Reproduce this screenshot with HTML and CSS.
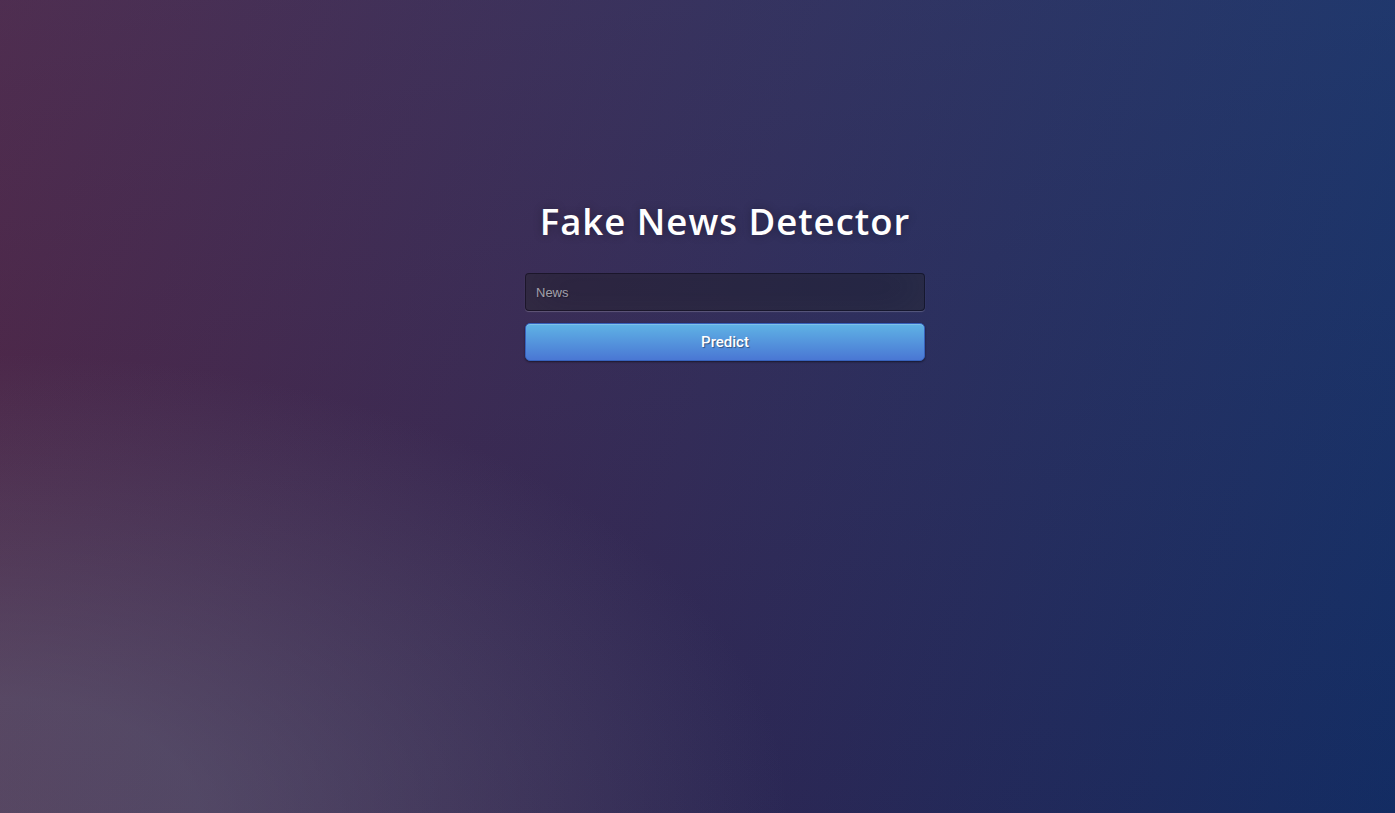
FILE: index.html
```html
<!DOCTYPE html>
<html lang="en">
<head>
<meta charset="utf-8">
<title>Fake News Detector</title>
<link rel="stylesheet" href="styles.css">
</head>
<body>
<main class="page">
  <div class="login">
    <h1 class="title">Fake News Detector</h1>
    <form class="form">
      <input class="field" type="text" name="news" placeholder="News">
      <button class="btn" type="submit">Predict</button>
    </form>
  </div>
</main>
</body>
</html>
```

FILE: styles.css
```css
* { box-sizing: border-box; }
html, body { margin: 0; height: 100%; }
body {
  font-family: "Open Sans", sans-serif;
  background-color: #14295a;
  background-image:
    radial-gradient(ellipse farthest-corner at 0% 100%, rgba(110,132,150,.38) 10%, rgba(110,132,150,0) 40%),
    linear-gradient(to bottom, rgba(50,150,219,.16) 0%, rgba(50,150,219,.04) 100%),
    linear-gradient(108deg, rgb(84,26,54) 0%, rgb(18,40,94) 100%);
  background-attachment: fixed;
  min-height: 100vh;
}
.page {
  display: flex;
  justify-content: center;
  padding: 197px 0 0 55px;
}
.login { width: 400px; }
.title {
  margin: 0 0 27px;
  color: #fff;
  font-size: 36.5px;
  font-weight: 600;
  line-height: 49px;
  letter-spacing: 1px;
  text-align: center;
  text-shadow: 0 0 10px rgba(0,0,0,0.3);
}
.form { display: flex; flex-direction: column; }
.field {
  width: 100%;
  height: 38px;
  margin: 0 0 12px;
  padding: 10px;
  font-family: "Liberation Sans", Arial, sans-serif;
  font-size: 13px;
  color: #fff;
  background: rgba(0,0,0,0.3);
  border: 1px solid rgba(0,0,0,0.3);
  border-radius: 4px;
  outline: none;
  text-shadow: 1px 1px 1px rgba(0,0,0,0.3);
  box-shadow: inset 0 -5px 45px rgba(100,100,100,0.2), 0 1px 1px rgba(255,255,255,0.2);
}
.field::placeholder { color: rgba(255,255,255,0.58); }
.btn {
  width: 100%;
  height: 38px;
  padding: 9px 14px;
  font-family: Roboto, "Liberation Sans", Arial, sans-serif;
  font-size: 15px;
  font-weight: 500;
  line-height: 18px;
  color: #fff;
  cursor: pointer;
  background-color: #4a77d4;
  background-image: linear-gradient(to bottom, #5fb3e5, #4a77d4);
  border: 1px solid #3762bc;
  border-radius: 5px;
  text-shadow: 1px 1px 1px rgba(0,0,0,0.4);
  box-shadow: inset 0 1px 0 rgba(255,255,255,0.2), 0 1px 2px rgba(0,0,0,0.5);
}
```
